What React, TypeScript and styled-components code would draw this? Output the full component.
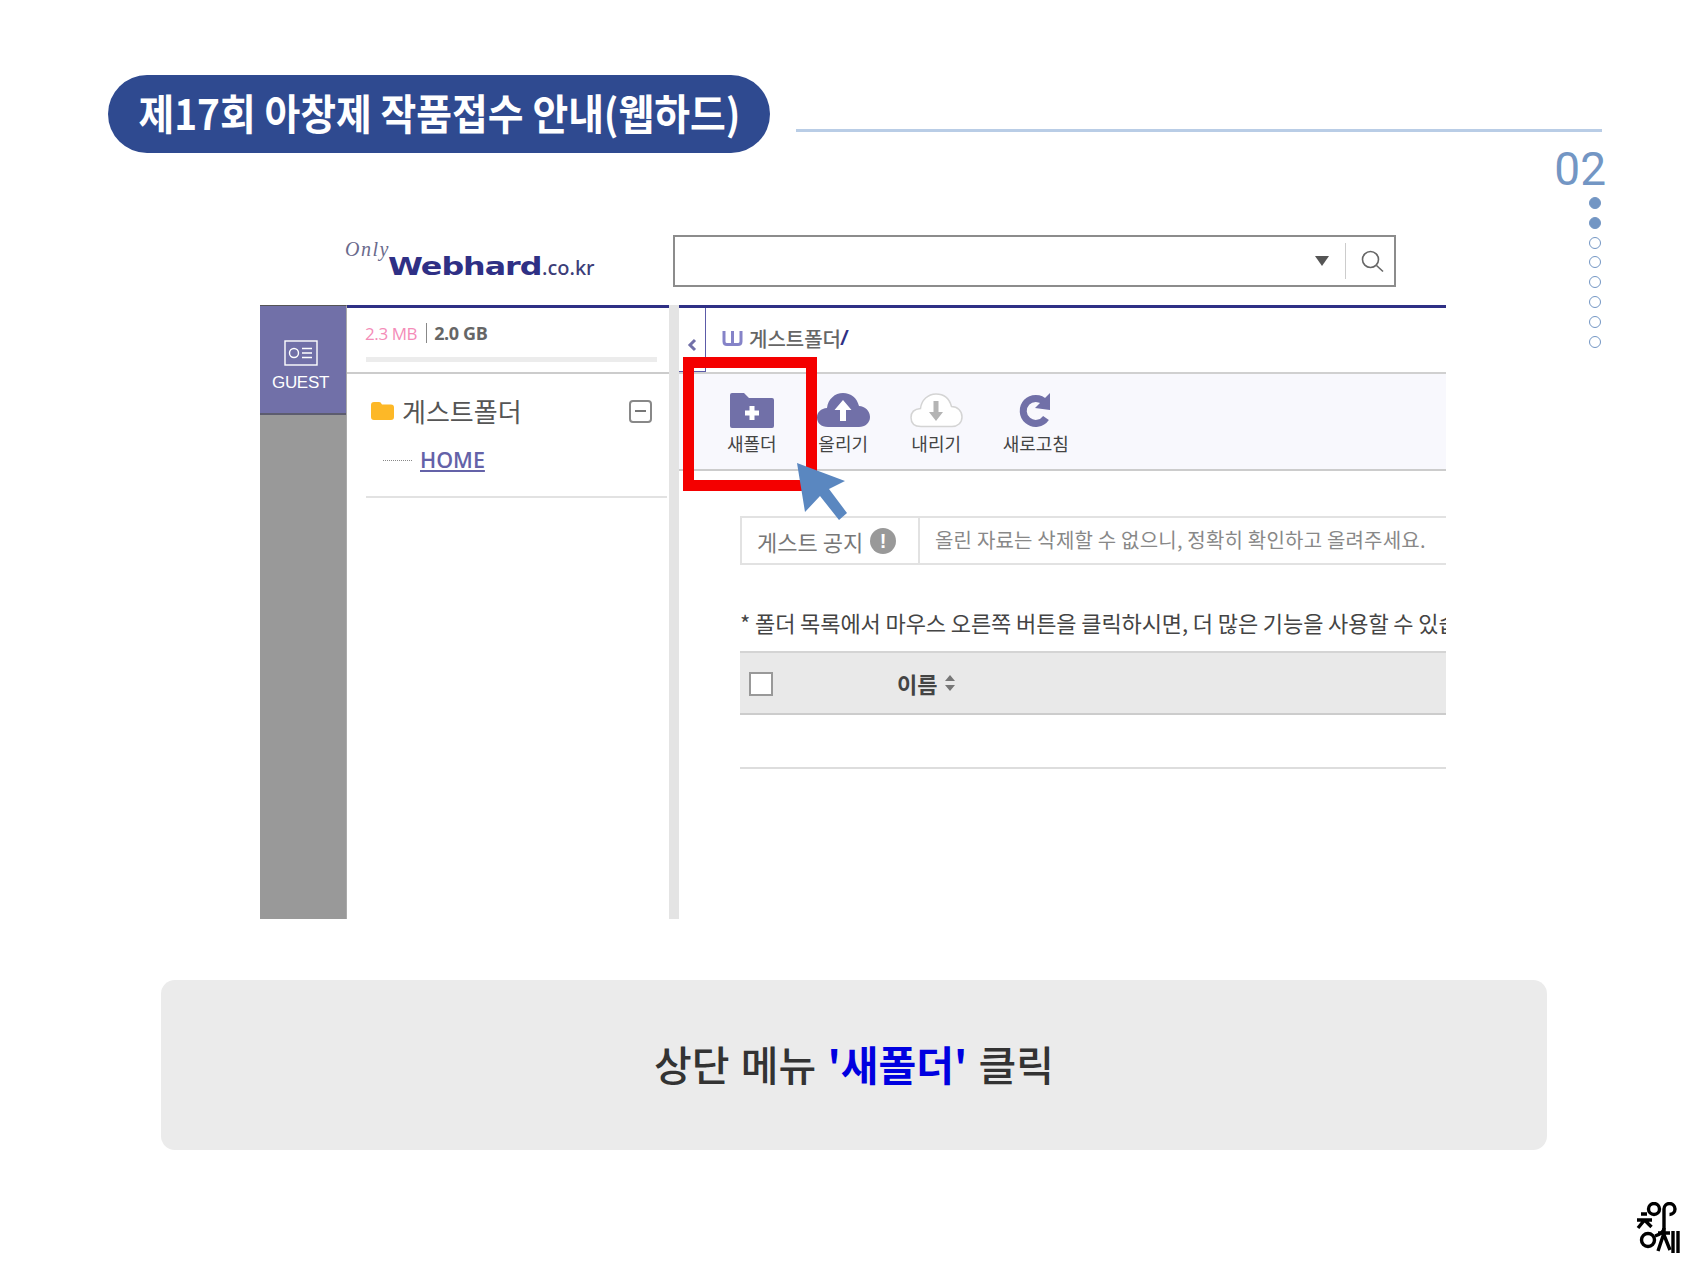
import styled, { createGlobalStyle } from "styled-components";

const GlobalStyle = createGlobalStyle`
  html, body {
    margin: 0;
    padding: 0;
    background: #fff;
  }
  * {
    box-sizing: border-box;
  }
`;

const PURPLE = "#7170a8";
const NAVY = "#2f3085";

export default function App() {
  return (
    <>
      <GlobalStyle />
      <Slide>
        <Header>
          <TitlePill>
            <TitleText>제17회 아창제 작품접수 안내(웹하드)</TitleText>
          </TitlePill>
          <HeaderLine />
        </Header>
        <Body>
          <Shot>
            <ShotTop>
              <Logo>
                <LogoOnly>Only</LogoOnly>
                <LogoName>Webhard</LogoName>
                <LogoDomain>.co.kr</LogoDomain>
              </Logo>
              <SearchBox>
                <SearchArrow />
                <SearchDivider />
                <svg width="24" height="24" viewBox="0 0 24 24" fill="none" stroke="#666" strokeWidth="1.6">
                  <circle cx="10.5" cy="10.5" r="8" />
                  <path d="M16.5 16.5 L23 22.5" />
                </svg>
              </SearchBox>
            </ShotTop>
            <ShotMain>
              <Rail>
                <GuestTab>
                  <svg width="34" height="26" viewBox="0 0 34 26" fill="none" stroke="#fff" strokeWidth="1.4">
                    <rect x="1" y="1" width="32" height="24" />
                    <circle cx="10" cy="13" r="4.5" />
                    <path d="M18 8.5h10M18 13h10M18 17.5h10" />
                  </svg>
                  <GuestLabel>GUEST</GuestLabel>
                </GuestTab>
              </Rail>
              <TreePanel>
                <Storage>
                  <StorageText>
                    <Used>2.3 MB</Used>
                    <StorageBar />
                    <Total>2.0 GB</Total>
                  </StorageText>
                  <StorageGauge />
                </Storage>
                <Tree>
                  <TreeRoot>
                    <svg width="23" height="18" viewBox="0 0 23 18">
                      <path
                        d="M0 3a3 3 0 0 1 3-3h5c1.5 0 2 .8 3 2.500h9a3 3 0 0 1 3 3V15a3 3 0 0 1-3 3H3a3 3 0 0 1-3-3Z"
                        fill="#fdb827"
                      />
                    </svg>
                    <TreeRootLabel>게스트폴더</TreeRootLabel>
                    <Collapse />
                  </TreeRoot>
                  <TreeChild>
                    <TreeDots />
                    <HomeLink>HOME</HomeLink>
                  </TreeChild>
                </Tree>
              </TreePanel>
              <Splitter />
              <MainPanel>
                <Crumbs>
                  <BackCell>
                    <svg width="10" height="14" viewBox="0 0 10 14" fill="none" stroke={PURPLE} strokeWidth="3">
                      <path d="M8 2 L3 7 L8 12" />
                    </svg>
                  </BackCell>
                  <CrumbPath>
                    <svg width="21" height="15" viewBox="0 0 21 15" fill="none" stroke="#8583c8" strokeWidth="3">
                      <path d="M2 0v10.500q0 3 3 3h11q3 0 3-3V0M10.500 0v13" />
                    </svg>
                    <CrumbText>게스트폴더</CrumbText>
                    <CrumbSlash>/</CrumbSlash>
                  </CrumbPath>
                </Crumbs>
                <Toolbar>
                  <ToolItem>
                    <svg width="44" height="35" viewBox="0 0 44 35">
                      <path
                        d="M0 2a2 2 0 0 1 2-2h12l5 5h23a2 2 0 0 1 2 2v26a2 2 0 0 1-2 2H2a2 2 0 0 1-2-2Z"
                        fill={PURPLE}
                      />
                      <path d="M19.500 15h5v4.500h4.500v5h-4.500V29h-5v-4.500H15v-5h4.500Z" fill="#fff" transform="translate(0 -2)" />
                    </svg>
                    <ToolLabel>새폴더</ToolLabel>
                  </ToolItem>
                  <ToolItem>
                    <svg width="53" height="35" viewBox="0 0 53 35">
                      <path
                        d="M11 34C4 34 0 30 0 24.500S4 15.500 10 15C11 6 18 0 26 0c8 0 14 5 16 13 6 0 11 5 11 11s-5 10-11 10Z"
                        fill={PURPLE}
                      />
                      <path d="M26 7l8.500 10H29v11h-6V17h-5.500Z" fill="#fff" />
                    </svg>
                    <ToolLabel>올리기</ToolLabel>
                  </ToolItem>
                  <ToolItem>
                    <svg width="53" height="35" viewBox="0 0 53 35">
                      <path
                        d="M11 33.500C4.500 33.500 1 30 1 24.500S4.500 16 10.500 15.500C11.500 7 18 1 26 1c8 0 13.500 5 15.500 12.500C47.500 13.500 52 18 52 24s-4.500 9.500-10 9.500Z"
                        fill="#fff"
                        stroke="#d4d4d4"
                        strokeWidth="1.500"
                      />
                      <path d="M23.500 8h5v11H33l-7 9-7-9h4.500Z" fill="#b4b4b4" />
                    </svg>
                    <ToolLabel>내리기</ToolLabel>
                  </ToolItem>
                  <ToolItem>
                    <svg width="35" height="35" viewBox="0 0 35 35">
                      <path d="M27 9.500A12.500 12.500 0 1 0 28 25" fill="none" stroke={PURPLE} strokeWidth="7" />
                      <path d="M32 0V17L17 15Z" fill={PURPLE} />
                    </svg>
                    <ToolLabel>새로고침</ToolLabel>
                  </ToolItem>
                </Toolbar>
                <Content>
                  <Notice>
                    <NoticeHead>
                      게스트 공지
                      <NoticeBadge>!</NoticeBadge>
                    </NoticeHead>
                    <NoticeBody>올린 자료는 삭제할 수 없으니, 정확히 확인하고 올려주세요.</NoticeBody>
                  </Notice>
                  <HelpText>* 폴더 목록에서 마우스 오른쪽 버튼을 클릭하시면, 더 많은 기능을 사용할 수 있습니다.</HelpText>
                  <TableHead>
                    <CheckBox />
                    <NameHead>
                      이름
                      <svg width="12" height="16" viewBox="0 0 12 16" fill="#777">
                        <path d="M6 0l5 6H1ZM6 16l-5-6h10Z" />
                      </svg>
                    </NameHead>
                  </TableHead>
                  <EmptyRow />
                </Content>
                <Highlight />
                <Pointer width="60" height="62" viewBox="0 0 60 62">
                  <path d="M0 0 L48 18 L32 26 L50 50 L42 57 L23 33 L8 49 Z" fill="#5a87c0" />
                </Pointer>
              </MainPanel>
            </ShotMain>
          </Shot>
          <Pager>
            <PageNumber>02</PageNumber>
            <PageDots>
              {[true, true, false, false, false, false, false, false].map((filled, i) => (
                <PageDot key={i} $filled={filled} />
              ))}
            </PageDots>
          </Pager>
        </Body>
        <Caption>
          <CaptionText>
            상단 메뉴 <CaptionStrong>'새폴더'</CaptionStrong> 클릭
          </CaptionText>
        </Caption>
        <Footer>
          <svg width="46" height="54" viewBox="0 0 46 54" fill="none" stroke="#000" strokeWidth="3.4">
            <circle cx="19" cy="7" r="5.500" />
            <path d="M29 30V7a5.500 5.500 0 1 1 5.500 5.500" />
            <path d="M6 12h6M2 18h15M9.500 18L3 26M9.500 18l7 7" />
            <circle cx="13" cy="38" r="6.500" />
            <path d="M29 26q0 5-9 8" />
            <path d="M23 31h12M29 31l-6 18M29 33l6 15" />
            <path d="M38 29V51M43 29V51" />
          </svg>
        </Footer>
      </Slide>
    </>
  );
}

const Slide = styled.div`
  width: 1708px;
  height: 1281px;
  overflow: hidden;
  background: #fff;
  font-family: "Noto Sans CJK KR", "Noto Sans", sans-serif;
`;

const Header = styled.div`
  display: flex;
  align-items: center;
  gap: 26px;
  padding: 75px 106px 0 108px;
  margin-bottom: -3px;
`;

const TitlePill = styled.div`
  width: 662px;
  height: 78px;
  border-radius: 39px;
  background: #2f4a90;
  display: flex;
  align-items: center;
  justify-content: center;
`;

const TitleText = styled.span`
  color: #fff;
  font-size: 42px;
  font-weight: 700;
  line-height: 74px;
  white-space: nowrap;
  transform: scaleX(0.925);
  margin-top: -4px;
`;

const HeaderLine = styled.div`
  flex: 1;
  height: 3px;
  margin-top: 32px;
  background: #b9cde6;
`;

const Body = styled.div`
  display: flex;
  padding-left: 260px;
`;

const Shot = styled.div`
  width: 1186px;
  height: 701px;
  margin-top: 68px;
  display: flex;
  flex-direction: column;
  overflow: hidden;
`;

const ShotTop = styled.div`
  height: 87px;
  padding: 17px 0 0 85px;
  display: flex;
`;

const Logo = styled.div`
  width: 328px;
  height: 50px;
  display: flex;
  align-items: flex-end;
  padding-bottom: 5px;
  color: ${NAVY};
`;

const LogoOnly = styled.span`
  align-self: flex-start;
  margin-top: 3px;
  width: 43px;
  font-family: "Liberation Serif", serif;
  font-style: italic;
  font-size: 20px;
  line-height: 22px;
  letter-spacing: 1.5px;
  color: #6a6a8c;
`;

const LogoName = styled.span`
  width: 154px;
  font-family: "DejaVu Sans", sans-serif;
  font-weight: 700;
  font-size: 25px;
  line-height: 26px;
  letter-spacing: -0.8px;
  white-space: nowrap;
  transform: scaleX(1.27);
  transform-origin: left center;
`;

const LogoDomain = styled.span`
  font-family: "Noto Sans", sans-serif;
  font-weight: 500;
  font-size: 20px;
  line-height: 24px;
  color: #3c3d78;
`;

const SearchBox = styled.div`
  width: 723px;
  height: 52px;
  border: 2px solid #8c8c8c;
  display: flex;
  align-items: center;
  justify-content: flex-end;
  padding-right: 10px;
`;

const SearchArrow = styled.div`
  width: 0;
  height: 0;
  border-left: 7px solid transparent;
  border-right: 7px solid transparent;
  border-top: 10px solid #555;
`;

const SearchDivider = styled.div`
  width: 1px;
  height: 36px;
  background: #ccc;
  margin: 0 14px 0 16px;
`;

const ShotMain = styled.div`
  flex: 1;
  display: flex;
  min-height: 0;
`;

const Rail = styled.div`
  width: 87px;
  background: #999;
  border-top: 1px solid #555;
  border-right: 1px solid #aaa;
`;

const GuestTab = styled.div`
  height: 109px;
  background: ${PURPLE};
  border-bottom: 2px solid #5c5c6e;
  display: flex;
  flex-direction: column;
  align-items: center;
  padding: 34px 5px 0 0;
  color: #fff;
`;

const GuestLabel = styled.div`
  font-family: "Liberation Sans", sans-serif;
  font-size: 17px;
  line-height: 22px;
  margin-top: 6px;
  letter-spacing: -0.3px;
`;

const TreePanel = styled.div`
  width: 322px;
  border-top: 3px solid ${NAVY};
`;

const Storage = styled.div`
  height: 66px;
  padding: 13px 12px 0 18px;
  border-bottom: 2px solid #ccc;
`;

const StorageText = styled.div`
  display: flex;
  align-items: center;
  height: 24px;
  font-family: "Open Sans", sans-serif;
  font-size: 17px;
  letter-spacing: -0.4px;
`;

const Used = styled.span`
  color: #f48cb8;
`;

const StorageBar = styled.span`
  width: 1px;
  height: 20px;
  background: #888;
  margin: 0 7px 0 9px;
`;

const Total = styled.span`
  color: #666;
  font-weight: 700;
  font-size: 18px;
`;

const StorageGauge = styled.div`
  height: 5px;
  margin: 12px 0 0 1px;
  background: #ececec;
`;

const Tree = styled.div`
  margin: 0 2px 0 19px;
  padding: 20px 0 0 5px;
  height: 124px;
  border-bottom: 2px solid #e2e2e2;
`;

const TreeRoot = styled.div`
  display: flex;
  align-items: center;
  height: 34px;
  padding-right: 15px;
`;

const TreeRootLabel = styled.span`
  margin-left: 8px;
  flex: 1;
  font-size: 26px;
  line-height: 34px;
  color: #555;
`;

const Collapse = styled.div`
  position: relative;
  width: 23px;
  height: 23px;
  border: 2px solid #888;
  border-radius: 4px;
  &::after {
    content: "";
    position: absolute;
    left: 4px;
    right: 4px;
    top: 8px;
    height: 2px;
    background: #777;
  }
`;

const TreeChild = styled.div`
  display: flex;
  align-items: center;
  margin: 19px 0 0 12px;
`;

const TreeDots = styled.div`
  width: 29px;
  border-top: 1px dotted #888;
  margin-right: 8px;
`;

const HomeLink = styled.span`
  font-family: "Open Sans", sans-serif;
  font-weight: 600;
  font-size: 21.500px;
  line-height: 26px;
  color: #6462a8;
  text-decoration: underline;
`;

const Splitter = styled.div`
  width: 10px;
  background: #e4e4e4;
`;

const MainPanel = styled.div`
  position: relative;
  flex: 1;
  min-width: 0;
  border-top: 3px solid ${NAVY};
`;

const Crumbs = styled.div`
  display: flex;
  height: 64px;
`;

const BackCell = styled.div`
  width: 27px;
  border-right: 1px solid #5c5ba8;
  border-bottom: 1px solid #5c5ba8;
  display: flex;
  align-items: center;
  justify-content: center;
  padding-top: 10px;
`;

const CrumbPath = styled.div`
  display: flex;
  align-items: center;
  gap: 6px;
  padding: 0 0 4px 16px;
`;

const CrumbText = styled.span`
  font-size: 20px;
  font-weight: 500;
  color: #666;
`;

const CrumbSlash = styled.span`
  margin-left: -6px;
  font-family: "Liberation Sans", sans-serif;
  font-weight: 700;
  font-size: 21px;
  font-style: italic;
  color: ${NAVY};
`;

const Toolbar = styled.div`
  height: 99px;
  background: #f8f8fd;
  border-top: 2px solid #d0d0d0;
  border-bottom: 2px solid #ccc;
  display: flex;
  gap: 40px;
  padding: 19px 0 0 48px;
`;

const ToolItem = styled.div`
  display: flex;
  flex-direction: column;
  align-items: center;
`;

const ToolLabel = styled.span`
  margin-top: 3px;
  font-size: 18px;
  line-height: 24px;
  color: #444;
`;

const Content = styled.div`
  padding: 45px 0 0 61px;
  overflow: hidden;
`;

const Notice = styled.div`
  display: flex;
  height: 49px;
  border: 2px solid #e2e2e2;
  border-right: 0;
`;

const NoticeHead = styled.div`
  width: 178px;
  flex: none;
  display: flex;
  align-items: center;
  gap: 7px;
  padding-left: 15px;
  border-right: 2px solid #e2e2e2;
  font-size: 22px;
  color: #777;
`;

const NoticeBadge = styled.span`
  width: 26px;
  height: 26px;
  border-radius: 50%;
  background: #999;
  color: #fff;
  font-family: "Liberation Sans", sans-serif;
  font-size: 20px;
  font-weight: 700;
  line-height: 26px;
  text-align: center;
`;

const NoticeBody = styled.div`
  padding-left: 15px;
  font-size: 20px;
  line-height: 44px;
  letter-spacing: 0.2px;
  white-space: nowrap;
  color: #888;
`;

const HelpText = styled.div`
  margin-top: 38px;
  font-size: 22px;
  line-height: 38px;
  letter-spacing: -0.1px;
  white-space: nowrap;
  color: #444;
`;

const TableHead = styled.div`
  height: 64px;
  margin-top: 10px;
  background: #e9e9e9;
  border-top: 2px solid #d4d4d4;
  border-bottom: 2px solid #ccc;
  display: flex;
  align-items: center;
  padding-left: 9px;
`;

const CheckBox = styled.div`
  width: 24px;
  height: 24px;
  margin-top: 2px;
  background: #fff;
  border: 2px solid #999;
`;

const NameHead = styled.div`
  display: flex;
  align-items: center;
  gap: 7px;
  margin-left: 124px;
  font-size: 22px;
  font-weight: 700;
  color: #444;
`;

const EmptyRow = styled.div`
  height: 54px;
  border-bottom: 2px solid #ddd;
`;

const Highlight = styled.div`
  position: absolute;
  left: 4px;
  top: 49px;
  width: 134px;
  height: 134px;
  border: 11px solid #f40000;
`;

const Pointer = styled.svg`
  position: absolute;
  left: 118px;
  top: 155px;
`;

const Pager = styled.div`
  width: 51px;
  margin-left: 109px;
  display: flex;
  flex-direction: column;
  align-items: flex-end;
`;

const PageNumber = styled.div`
  font-family: Roboto, sans-serif;
  font-size: 46px;
  line-height: 38px;
  color: #7396c4;
`;

const PageDots = styled.div`
  display: flex;
  flex-direction: column;
  gap: 7.800px;
  margin: 9px 5px 0 0;
`;

const PageDot = styled.div<{ $filled: boolean }>`
  width: 12px;
  height: 12px;
  border-radius: 50%;
  border: 1.500px solid #7396c4;
  background: ${(props) => (props.$filled ? "#7396c4" : "#fff")};
`;

const Caption = styled.div`
  width: 1386px;
  height: 170px;
  margin: 61px 0 0 161px;
  border-radius: 14px;
  background: #ebebeb;
  display: flex;
  align-items: center;
  justify-content: center;
  font-size: 41px;
  font-weight: 500;
  color: #333;
`;

const CaptionText = styled.div`
  margin-top: -4px;
  word-spacing: 2px;
`;

const CaptionStrong = styled.strong`
  font-weight: 700;
  color: #0000e0;
`;

const Footer = styled.div`
  display: flex;
  justify-content: flex-end;
  padding: 52px 27px 0 0;
`;
